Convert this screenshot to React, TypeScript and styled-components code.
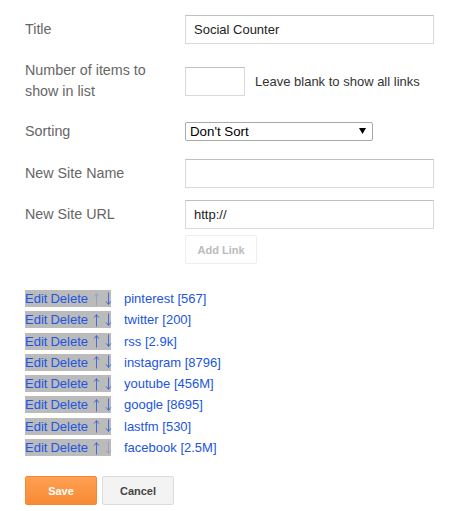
import React from "react";
import styled, { createGlobalStyle } from "styled-components";

const GlobalStyle = createGlobalStyle`
    body {
        margin: 0;
        background: #fff;
        font-family: "Liberation Sans", Arial, sans-serif;
    }
`;

const Page = styled.div`
    width: 475px;
    padding: 15px 0 0 25px;
    box-sizing: border-box;
`;

const FormRow = styled.div<{ $after: number; $height?: number }>`
    display: flex;
    align-items: center;
    min-height: ${(p) => p.$height ?? 29}px;
    margin-bottom: ${(p) => p.$after}px;
`;

const Label = styled.label`
    width: 160px;
    flex-shrink: 0;
    font-size: 14.3px;
    line-height: 21px;
    color: #666;
`;

const TextInput = styled.input<{ $width?: number }>`
    width: ${(p) => p.$width ?? 249}px;
    height: 29px;
    box-sizing: border-box;
    border: 1px solid #d9d9d9;
    border-top-color: #c0c0c0;
    padding: 0 8px;
    font-family: "Liberation Sans", Arial, sans-serif;
    font-size: 13px;
    color: #222;
    outline: none;
`;

const Hint = styled.span`
    margin-left: 10px;
    font-size: 13px;
    color: #333;
`;

const SelectWrap = styled.div`
    position: relative;
    width: 188px;
    height: 19px;
`;

const Select = styled.select`
    appearance: none;
    width: 100%;
    height: 100%;
    box-sizing: border-box;
    border: 1px solid #a9a9a9;
    border-radius: 2px;
    background: #fff;
    padding: 0 0 0 4px;
    font-family: "Liberation Sans", Arial, sans-serif;
    font-size: 13.3px;
    color: #000;
    outline: none;
`;

const SelectArrow = styled.svg`
    position: absolute;
    right: 7px;
    top: 6px;
    pointer-events: none;
`;

const Spacer = styled.div`
    width: 160px;
    flex-shrink: 0;
`;

const SmallButton = styled.button`
    width: 72px;
    height: 29px;
    border: 1px solid #eee;
    border-radius: 2px;
    background: #fff;
    font-family: "Liberation Sans", Arial, sans-serif;
    font-size: 11px;
    font-weight: bold;
    color: #bbb;
`;

const LinkList = styled.ul`
    list-style: none;
    margin: 26px 0 0;
    padding: 0;
`;

const LinkItem = styled.li`
    display: flex;
    align-items: center;
    height: 17px;
    margin-bottom: 4.3px;
    font-size: 13px;
    line-height: 17px;
`;

const Controls = styled.span`
    display: flex;
    align-items: center;
    gap: 3px;
    width: 86px;
    height: 17px;
    background: #bbb;
    white-space: nowrap;
`;

const Action = styled.a<{ $dim?: boolean }>`
    display: flex;
    align-items: center;
    color: ${(p) => (p.$dim ? "#8f9cb8" : "#2155e0")};
    text-decoration: none;
`;

const ArrowLink = styled(Action)`
    margin-left: 2px;
    height: 17px;
    opacity: 0.85;
`;

const SiteName = styled.a`
    margin-left: 13px;
    color: #2155e0;
    text-decoration: none;
`;

const Footer = styled.div`
    display: flex;
    gap: 5px;
    margin-top: 20px;
`;

const Button = styled.button<{ $primary?: boolean }>`
    width: 72px;
    height: 29px;
    border-radius: 2px;
    border: 1px solid ${(p) => (p.$primary ? "#f38a32" : "#dcdcdc")};
    background: ${(p) =>
        p.$primary ? "linear-gradient(#fea052, #f88a35)" : "#f3f3f3"};
    color: ${(p) => (p.$primary ? "#fff" : "#444")};
    font-family: "Liberation Sans", Arial, sans-serif;
    font-size: 11px;
    font-weight: bold;
`;

const links = [
    ["pinterest", "567"],
    ["twitter", "200"],
    ["rss", "2.9k"],
    ["instagram", "8796"],
    ["youtube", "456M"],
    ["google", "8695"],
    ["lastfm", "530"],
    ["facebook", "2.5M"],
];

// thin arrow like Arial's ↑ / ↓
const Arrow = ({ up }: { up: boolean }) => (
    <svg width="7" height="14" viewBox="0 0 7 14" style={{ transform: up ? "none" : "rotate(180deg)" }}>
        <path d="M3.5 1.8V13.5M1.2 4.6L3.5 1.5L5.8 4.6" fill="none" stroke="currentColor" strokeWidth="0.9" />
    </svg>
);

const App: React.FC = () => {
    return (
        <>
            <GlobalStyle />
            <Page>
                <FormRow $after={16}>
                    <Label>Title</Label>
                    <TextInput defaultValue="Social Counter" />
                </FormRow>
                <FormRow $after={15}>
                    <Label>
                        Number of items to
                        <br />
                        show in list
                    </Label>
                    <TextInput $width={60} />
                    <Hint>Leave blank to show all links</Hint>
                </FormRow>
                <FormRow $after={13}>
                    <Label>Sorting</Label>
                    <SelectWrap>
                        <Select defaultValue="none">
                            <option value="none">Don't Sort</option>
                        </Select>
                        <SelectArrow width="7" height="6" viewBox="0 0 7 6">
                            <path d="M0 0H7L3.5 6Z" fill="#000" />
                        </SelectArrow>
                    </SelectWrap>
                </FormRow>
                <FormRow $after={12}>
                    <Label>New Site Name</Label>
                    <TextInput />
                </FormRow>
                <FormRow $after={6}>
                    <Label>New Site URL</Label>
                    <TextInput defaultValue="http://" />
                </FormRow>
                <FormRow $after={0}>
                    <Spacer />
                    <SmallButton>Add Link</SmallButton>
                </FormRow>

                <LinkList>
                    {links.map(([name, count], i) => (
                        <LinkItem key={name}>
                            <Controls>
                                <Action href="#">Edit</Action>
                                <Action href="#">Delete</Action>
                                <ArrowLink href="#" $dim={i === 0}>
                                    <Arrow up />
                                </ArrowLink>
                                <ArrowLink href="#" $dim={i === links.length - 1}>
                                    <Arrow up={false} />
                                </ArrowLink>
                            </Controls>
                            <SiteName href="#">
                                {name} [{count}]
                            </SiteName>
                        </LinkItem>
                    ))}
                </LinkList>

                <Footer>
                    <Button $primary>Save</Button>
                    <Button>Cancel</Button>
                </Footer>
            </Page>
        </>
    );
};

export default App;
